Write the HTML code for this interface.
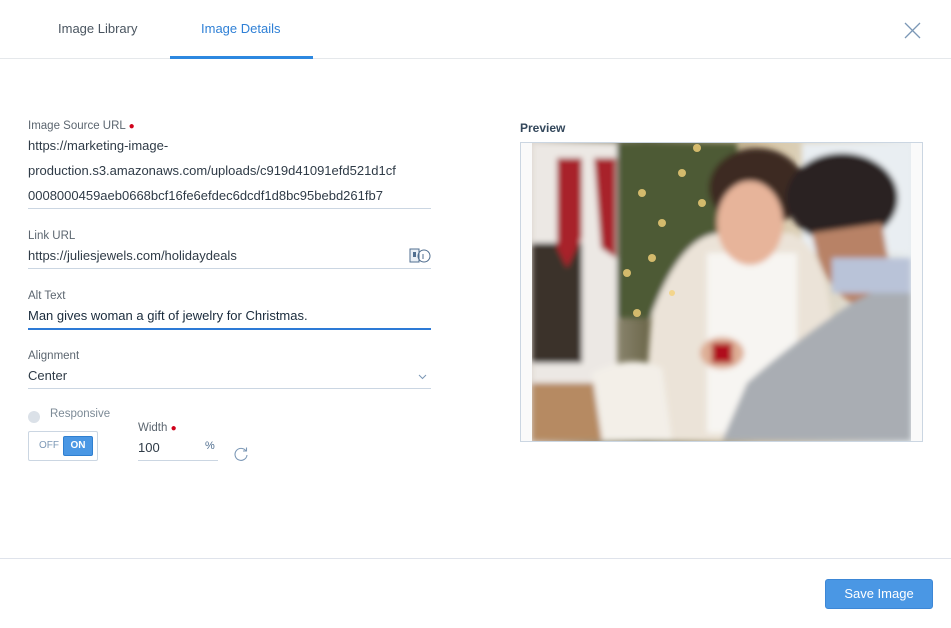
<!DOCTYPE html>
<html><head><meta charset="utf-8"><style>
*{margin:0;padding:0;box-sizing:border-box}
body{width:951px;height:628px;background:#fff;font-family:"Liberation Sans",sans-serif;position:relative;overflow:hidden;color:#33475b}
.abs{position:absolute}
.tab{font-size:13px;top:21px}
.lbl{font-size:11.5px;color:#5c6670;left:28px}
.val{font-size:13px;color:#2f3b47;left:28px}
.line{height:1px;background:#cbd6e2;left:28px;width:403px}
.req{color:#d0021b;font-size:10px}
</style></head><body>
<div class="abs tab" style="left:58px;color:#4a5560">Image Library</div>
<div class="abs tab" style="left:201px;color:#2f80d6">Image Details</div>
<div class="abs" style="left:0;top:58px;width:951px;height:1px;background:#e5e8eb"></div>
<div class="abs" style="left:170px;top:56px;width:143px;height:3px;background:#2d88e0"></div>
<svg class="abs" style="left:904px;top:22px" width="17" height="17"><path d="M1 1L16 16M16 1L1 16" stroke="#7c98b6" stroke-width="1.3"/></svg>

<div class="abs lbl" style="top:120px">Image Source URL <span class="req">●</span></div>
<div class="abs val" style="top:138px">https://marketing-image-</div>
<div class="abs val" style="top:163px">production.s3.amazonaws.com/uploads/c919d41091efd521d1cf</div>
<div class="abs val" style="top:188px">0008000459aeb0668bcf16fe6efdec6dcdf1d8bc95bebd261fb7</div>
<div class="abs line" style="top:208px"></div>

<div class="abs lbl" style="top:230px">Link URL</div>
<div class="abs val" style="top:248px">https://juliesjewels.com/holidaydeals</div>
<svg class="abs" style="left:409px;top:248px" width="22" height="17"><rect x="1" y="1" width="9" height="13" fill="#eaf0f6" stroke="#516f90"/><rect x="4" y="4" width="3" height="5" fill="#516f90"/><circle cx="15" cy="8" r="6" fill="none" stroke="#516f90"/><path d="M14 6v5" stroke="#516f90"/></svg>
<div class="abs line" style="top:268px"></div>

<div class="abs lbl" style="top:290px">Alt Text</div>
<div class="abs val" style="top:308px;color:#1a2b3c">Man gives woman a gift of jewelry for Christmas.</div>
<div class="abs" style="left:28px;top:328px;width:403px;height:2px;background:#2d7ad6"></div>

<div class="abs lbl" style="top:350px">Alignment</div>
<div class="abs val" style="top:368px">Center</div>
<svg class="abs" style="left:418px;top:374px" width="9" height="6"><path d="M1 1l3.5 3.5L8 1" fill="none" stroke="#7c98b6"/></svg>
<div class="abs line" style="top:388px"></div>

<div class="abs" style="left:28px;top:411px;width:12px;height:12px;border-radius:50%;background:#dbe1e8"></div>
<div class="abs lbl" style="left:50px;top:408px;color:#7c8a96">Responsive</div>
<div class="abs" style="left:28px;top:431px;width:70px;height:30px;border:1px solid #cbd6e2;border-radius:2px;background:#fff"></div>
<div class="abs" style="left:39px;top:440px;font-size:10px;color:#7c98b6">OFF</div>
<div class="abs" style="left:63px;top:436px;width:30px;height:20px;background:#4a97e4;border:1px solid #2f7fd0;border-radius:2px;color:#fff;font-size:10px;font-weight:bold;text-align:center;line-height:18px">ON</div>

<div class="abs lbl" style="left:138px;top:422px">Width <span class="req">●</span></div>
<div class="abs val" style="left:138px;top:440px">100</div>
<div class="abs" style="left:205px;top:440px;font-size:11px;color:#516f90">%</div>
<div class="abs" style="left:138px;top:460px;width:80px;height:1px;background:#cbd6e2"></div>
<svg class="abs" style="left:233px;top:446px" width="16" height="16"><path d="M13 5A6 6 0 1 0 14 9" fill="none" stroke="#7c98b6" stroke-width="1.1"/><path d="M10 5h3.5V1.5" fill="none" stroke="#7c98b6" stroke-width="1.1"/></svg>

<div class="abs" style="left:520px;top:121px;font-size:12px;font-weight:bold;color:#33475b">Preview</div>
<div class="abs" style="left:520px;top:142px;width:403px;height:300px;border:1px solid #cbd6e2;background:#fafafa"></div>
<svg class="abs" style="left:532px;top:143px" width="379" height="298" viewBox="0 0 379 298">
<defs><filter id="b"><feGaussianBlur stdDeviation="3"/></filter>
<linearGradient id="bg" x1="0" x2="1"><stop offset="0" stop-color="#d9d2cb"/><stop offset=".3" stop-color="#6f6a4e"/><stop offset=".6" stop-color="#d7c5a3"/><stop offset="1" stop-color="#e6ecef"/></linearGradient></defs>
<rect width="379" height="298" fill="url(#bg)"/>
<g filter="url(#b)">
<rect x="0" y="0" width="85" height="298" fill="#ece8e4"/>
<rect x="0" y="100" width="50" height="120" fill="#3a302c"/>
<path d="M25 15 h25 v80 l-15 30 l-10-20z" fill="#a8242c"/>
<path d="M62 15 h22 v100 l-15 -10 z" fill="#a8242c"/>
<rect x="85" y="0" width="120" height="175" fill="#4d5a34"/>
<rect x="270" y="0" width="109" height="110" fill="#e9eef2"/>
<rect x="0" y="240" width="120" height="58" fill="#b68a62"/>
<path d="M110 298 L120 170 Q150 90 190 90 L260 90 Q300 110 300 200 L300 298Z" fill="#ebe3d8"/>
<path d="M60 230 Q100 210 130 225 L140 298 L70 298Z" fill="#f3efe8"/>
<rect x="175" y="110" width="90" height="180" fill="#f7f5f2"/>
<ellipse cx="225" cy="45" rx="48" ry="40" fill="#3e2b22"/>
<ellipse cx="218" cy="80" rx="33" ry="42" fill="#e7b49a"/>
<ellipse cx="310" cy="55" rx="56" ry="45" fill="#2b2420"/>
<path d="M280 90 Q290 150 330 165 L360 140 L350 80Z" fill="#b88266"/>
<path d="M190 298 L215 240 Q260 200 320 160 L379 130 L379 298Z" fill="#a9adb3"/>
<ellipse cx="190" cy="210" rx="22" ry="16" fill="#deae95"/>
<rect x="180" y="200" width="20" height="20" fill="#b0101c"/>
<rect x="300" y="115" width="79" height="35" fill="#b9c3d8"/>
</g>
<g fill="#f5d27a" opacity=".8"><circle cx="110" cy="50" r="4"/><circle cx="130" cy="80" r="4"/><circle cx="95" cy="130" r="4"/><circle cx="150" cy="30" r="4"/><circle cx="170" cy="60" r="4"/><circle cx="120" cy="115" r="4"/><circle cx="105" cy="170" r="4"/><circle cx="165" cy="5" r="4"/><circle cx="140" cy="150" r="3"/></g>
</svg>

<div class="abs" style="left:0;top:558px;width:951px;height:1px;background:#dfe3eb"></div>
<div class="abs" style="left:825px;top:579px;width:108px;height:30px;background:#4a97e4;border:1px solid #3d87d6;border-radius:3px;color:#fff;font-size:13px;text-align:center;line-height:28px">Save Image</div>
</body></html>
